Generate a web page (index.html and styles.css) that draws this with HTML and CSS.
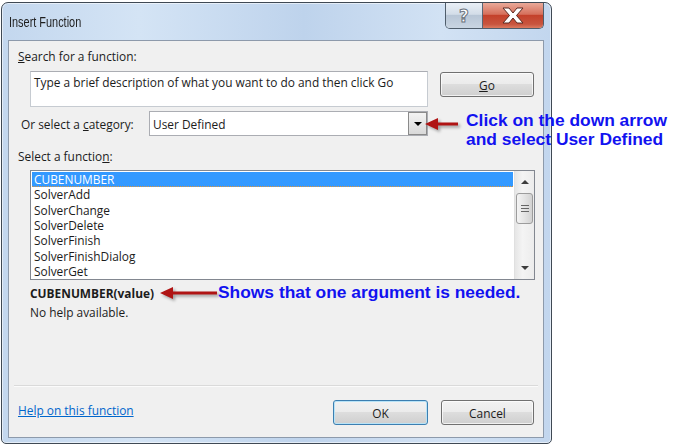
FILE: index.html
```html
<!doctype html>
<html lang="en">
  <head>
    <meta charset="UTF-8" />
    <title>Insert Function</title>
    <link rel="stylesheet" href="styles.css">
  </head>
  <body>
    <div class="window">
      <div class="titlebar">
        <span class="title">Insert Function</span>
        <div class="caption-btns">
          <div class="cap-btn cap-help">?</div>
          <div class="cap-btn cap-close">
            <svg width="24" height="17" viewBox="0 0 24 17">
              <path d="M2 1 H8 L12 6 L16 1 H22 L15.5 8.5 L22 16 H16 L12 11 L8 16 H2 L8.5 8.5 Z" fill="#fff" stroke="#5a2a22" stroke-width="1" stroke-linejoin="round"/>
            </svg>
          </div>
        </div>
      </div>

      <div class="panel">
        <div class="lbl"><u>S</u>earch for a function:</div>
        <div class="search-row">
          <div class="search-box">Type a brief description of what you want to do and then click Go</div>
          <div class="btn btn-go"><u>G</u>o</div>
        </div>

        <div class="cat-row">
          <span class="cat-lbl">Or select a <u>c</u>ategory:</span>
          <div class="select">
            <span class="select-val">User Defined</span>
            <span class="dd-btn"><span class="tri-down"></span></span>
          </div>
        </div>

        <div class="lbl lbl-fn">Select a functio<u>n</u>:</div>
        <div class="listbox">
          <ul class="fn-list">
            <li class="selected">CUBENUMBER</li>
            <li>SolverAdd</li>
            <li>SolverChange</li>
            <li>SolverDelete</li>
            <li>SolverFinish</li>
            <li>SolverFinishDialog</li>
            <li>SolverGet</li>
          </ul>
          <div class="scrollbar">
            <span class="sb-up"></span>
            <div class="sb-thumb">
              <span></span><span></span><span></span>
            </div>
            <span class="sb-down"></span>
          </div>
        </div>

        <div class="sig">CUBENUMBER(value)</div>
        <div class="desc">No help available.</div>

        <div class="spacer"></div>
        <div class="sep"></div>

        <div class="footer">
          <a href="#" class="help-link">Help on this function</a>
          <div class="btn btn-ok">OK</div>
          <div class="btn btn-cancel">Cancel</div>
        </div>
      </div>
    </div>

    <!-- annotations drawn over the screenshot -->
    <svg class="arrow arrow-cat" width="36" height="18" viewBox="0 0 36 18">
      <path d="M1 8 L14 2 L14 6.5 L34 6.5 L34 9.5 L14 9.5 L14 14 Z" fill="#b01414"/>
    </svg>
    <div class="note note-cat">Click on the down arrow<br>and select User Defined</div>

    <svg class="arrow arrow-arg" width="60" height="18" viewBox="0 0 60 18">
      <path d="M1 8 L14 2 L14 6.5 L58 6.5 L58 9.5 L14 9.5 L14 14 Z" fill="#b01414"/>
    </svg>
    <div class="note note-arg">Shows that one argument is needed.</div>
  </body>
</html>
```

FILE: styles.css
```css
* {
  margin: 0;
  padding: 0;
  box-sizing: border-box;
}

body {
  position: relative;
  width: 678px;
  height: 446px;
  overflow: hidden;
  background: #fff;
  font-family: 'Open Sans', 'Liberation Sans', sans-serif;
  font-size: 11.9px;
  color: #1c1c1c;
}

/* Window frame */
.window {
  display: flex;
  flex-direction: column;
  width: 551px;
  height: 442px;
  margin: 2px 0 0 1px;
  padding: 0 7px 5px 6px;
  border: 1px solid #3f4954;
  border-radius: 7px 7px 5px 5px;
  background: linear-gradient(90deg, #c3d7ee 0%, #d4e4f5 25%, #bed3ec 55%, #d2e2f4 80%, #c2d6ee 100%);
  box-shadow: inset 0 0 0 1px rgba(255, 255, 255, 0.55);
}

.titlebar {
  display: flex;
  align-items: flex-start;
  height: 37px;
  padding-left: 1px;
}

.title {
  display: inline-block;
  margin-top: 10px;
  font-family: 'Liberation Sans', sans-serif;
  font-size: 14px;
  line-height: 18px;
  color: #1e1e1e;
  transform: scaleX(0.78);
  transform-origin: left center;
  white-space: nowrap;
}

.caption-btns {
  display: flex;
  margin-left: auto;
  height: 26px;
  border: 1px solid #4f5d6b;
  border-top: none;
  border-radius: 0 0 5px 5px;
  overflow: hidden;
}

.cap-btn {
  display: flex;
  align-items: center;
  justify-content: center;
  height: 100%;
}

.cap-help {
  width: 37px;
  border-right: 1px solid #5a6674;
  background: linear-gradient(180deg, #e9eff6 0%, #d3dde8 45%, #b8c6d6 50%, #c9d5e2 100%);
  font-family: 'DejaVu Sans', sans-serif;
  font-weight: bold;
  font-size: 17px;
  color: #fff;
  -webkit-text-stroke: 1px #6b737c;
}

.cap-close {
  width: 60px;
  background: linear-gradient(180deg, #e9a999 0%, #d6705c 45%, #c4412b 50%, #c8553f 85%, #dc7a60 100%);
}

/* Dialog body */
.panel {
  flex: 1;
  display: flex;
  flex-direction: column;
  padding: 8px 9px 12px;
  background: #f0f0f0;
  border: 1px solid #8d9aab;
}

.lbl {
  height: 15px;
  line-height: 15px;
}

.search-row {
  display: flex;
  align-items: flex-start;
  margin-top: 7px;
}

.search-box {
  width: 398px;
  height: 36px;
  margin-left: 12px;
  padding: 3px 3px;
  line-height: 15px;
  background: #fff;
  border: 1px solid #c6cbd1;
  border-top-color: #abadb3;
  white-space: nowrap;
}

.btn {
  display: flex;
  align-items: center;
  justify-content: center;
  height: 25px;
  border: 1px solid #707070;
  border-radius: 3px;
  background: linear-gradient(180deg, #f2f2f2 0%, #ebebeb 49%, #dddddd 50%, #cfcfcf 100%);
  box-shadow: inset 0 0 0 1px rgba(255, 255, 255, 0.7);
}

.btn-go {
  width: 94px;
  margin-left: auto;
  margin-top: 1px;
}

.cat-row {
  display: flex;
  align-items: center;
  height: 25px;
  margin-top: 4px;
}

.cat-lbl {
  width: 128px;
  margin-left: 3px;
  white-space: nowrap;
}

.select {
  display: flex;
  align-items: center;
  width: 279px;
  height: 25px;
  background: #fff;
  border: 1px solid #abadb3;
}

.select-val {
  flex: 1;
  padding-left: 3px;
}

.dd-btn {
  display: flex;
  align-items: center;
  justify-content: center;
  width: 19px;
  height: 23px;
  border: 1px solid #8a8a8a;
  background: linear-gradient(180deg, #f3f3f3, #d9d9d9);
}

.tri-down {
  width: 0;
  height: 0;
  border-left: 4px solid transparent;
  border-right: 4px solid transparent;
  border-top: 4px solid #000;
}

.lbl-fn {
  margin-top: 13px;
}

/* Function list */
.listbox {
  display: flex;
  width: 505px;
  height: 110px;
  margin-top: 6px;
  margin-left: 12px;
  background: #fff;
  border: 1px solid #828790;
}

.fn-list {
  flex: 1;
  list-style: none;
  padding: 1px 1px 0;
}

.fn-list li {
  height: 15.35px;
  line-height: 15px;
  padding-left: 2px;
  white-space: nowrap;
}

.fn-list li.selected {
  background: #3399ff;
  color: #fff;
  border-bottom: 1px dotted #e0963a;
}

.scrollbar {
  position: relative;
  width: 20px;
  background: linear-gradient(90deg, #e6e6e6, #f4f4f4 40%, #ececec);
  border-left: 1px solid #e0e0e0;
}

.sb-up,
.sb-down {
  position: absolute;
  left: 6px;
  width: 0;
  height: 0;
  border-left: 4px solid transparent;
  border-right: 4px solid transparent;
}

.sb-up {
  top: 9px;
  border-bottom: 4px solid #3d3d3d;
}

.sb-down {
  bottom: 9px;
  border-top: 4px solid #3d3d3d;
}

.sb-thumb {
  position: absolute;
  top: 22px;
  left: 1px;
  right: 1px;
  height: 31px;
  display: flex;
  flex-direction: column;
  align-items: center;
  justify-content: center;
  gap: 2px;
  border: 1px solid #9c9c9c;
  border-radius: 3px;
  background: linear-gradient(90deg, #f4f4f4, #e4e4e4 50%, #d2d2d2);
}

.sb-thumb span {
  width: 8px;
  height: 1px;
  background: #666;
}

.sig {
  margin-top: 6px;
  margin-left: 12px;
  line-height: 15px;
  font-weight: bold;
}

.desc {
  margin-top: 4px;
  margin-left: 12px;
  line-height: 15px;
}

.spacer {
  flex: 1;
}

.sep {
  height: 2px;
  margin: 0 -4px;
  border-top: 1px solid #dadada;
  border-bottom: 1px solid #fbfbfb;
}

.footer {
  display: flex;
  align-items: flex-start;
  height: 25px;
  margin-top: 13px;
}

.help-link {
  margin-top: 3px;
  line-height: 15px;
  color: #0066cc;
  text-decoration: underline;
}

.btn-ok {
  width: 95px;
  margin-left: auto;
  border-color: #3c7fb1;
  box-shadow: inset 0 0 0 1px #b8e3f7;
}

.btn-cancel {
  width: 93px;
  margin-left: 13px;
}

/* Annotations */
.arrow {
  position: absolute;
  filter: drop-shadow(2px 2px 1.5px rgba(0, 0, 0, 0.35));
}

.arrow-cat {
  left: 424px;
  top: 116px;
}

.arrow-arg {
  left: 159px;
  top: 285px;
}

.note {
  position: absolute;
  font-family: 'Liberation Sans', Arial, sans-serif;
  font-weight: bold;
  font-size: 17.4px;
  line-height: 19px;
  color: #1212f0;
  white-space: nowrap;
}

.note-cat {
  left: 466px;
  top: 111px;
}

.note-arg {
  left: 218px;
  top: 283px;
}
```
